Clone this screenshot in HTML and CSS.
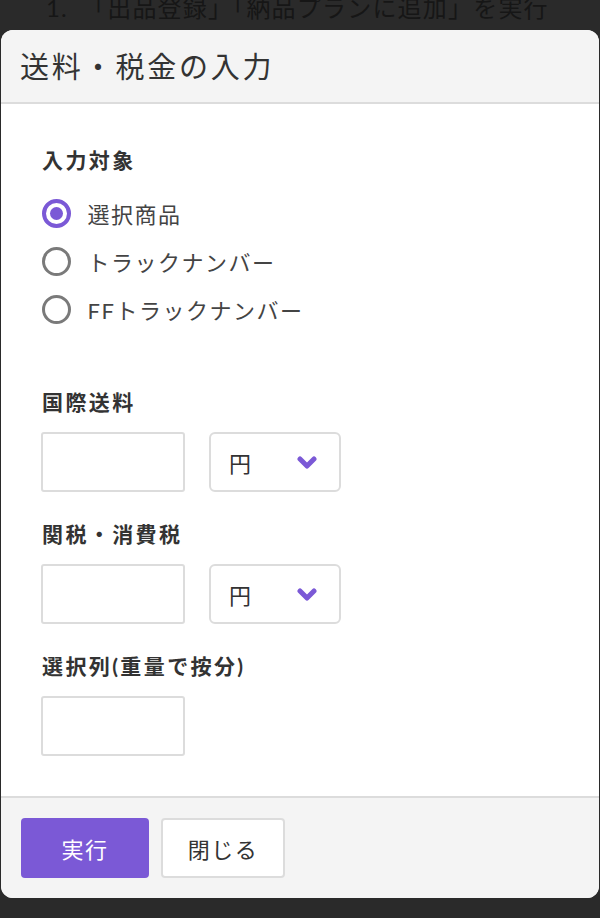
FILE: index.html
```html
<!DOCTYPE html>
<html lang="ja">
<head>
<meta charset="utf-8">
<title>送料・税金の入力</title>
<link rel="stylesheet" href="styles.css">
</head>
<body>
<div class="behind">
  <div class="behind-line"><span class="num">1.</span>「出品登録」「納品プランに追加」を実行</div>
</div>
<div class="modal">
  <div class="modal-header">
    <h2 class="modal-title">送料・税金の入力</h2>
  </div>
  <div class="modal-body">
    <div class="label first">入力対象</div>
    <div class="radios">
      <label class="radio-row"><span class="radio checked"></span><span class="radio-text">選択商品</span></label>
      <label class="radio-row"><span class="radio"></span><span class="radio-text">トラックナンバー</span></label>
      <label class="radio-row"><span class="radio"></span><span class="radio-text">FFトラックナンバー</span></label>
    </div>
    <div class="label section">国際送料</div>
    <div class="field-row">
      <div class="input"></div>
      <div class="select"><span class="select-value">円</span>
        <svg class="chev" width="20" height="14" viewBox="0 0 20 14"><polyline points="3,3 10,10 17,3" fill="none" stroke="#7b59d6" stroke-width="5" stroke-linecap="round" stroke-linejoin="round"/></svg>
      </div>
    </div>
    <div class="label next">関税・消費税</div>
    <div class="field-row">
      <div class="input"></div>
      <div class="select"><span class="select-value">円</span>
        <svg class="chev" width="20" height="14" viewBox="0 0 20 14"><polyline points="3,3 10,10 17,3" fill="none" stroke="#7b59d6" stroke-width="5" stroke-linecap="round" stroke-linejoin="round"/></svg>
      </div>
    </div>
    <div class="label next">選択列(重量で按分)</div>
    <div class="field-row">
      <div class="input"></div>
    </div>
  </div>
  <div class="modal-footer">
    <button class="btn btn-primary">実行</button>
    <button class="btn btn-default">閉じる</button>
  </div>
</div>
</body>
</html>
```

FILE: styles.css
```css
html, body {
  margin: 0;
  padding: 0;
}
body {
  background: #2a2a2a;
  font-family: "Lato", "Noto Sans CJK JP", sans-serif;
  height: 918px;
  overflow: hidden;
}
.behind {
  height: 30px;
  overflow: hidden;
}
.behind-line {
  margin-top: -9px;
  padding-left: 46px;
  font-size: 24px;
  letter-spacing: 1.2px;
  line-height: 34px;
  color: #161616;
  white-space: nowrap;
}
.behind-line .num {
  display: inline-block;
  width: 36px;
}
.modal {
  margin: 0 1px;
  background: #fff;
  border-radius: 12px;
  overflow: hidden;
}
.modal-header {
  height: 72px;
  background: #f4f4f4;
  border-bottom: 2px solid #dcdcdc;
  display: flex;
  align-items: center;
  padding-left: 19px;
}
.modal-title {
  margin: 0;
  font-size: 29px;
  letter-spacing: 2.8px;
  font-weight: 400;
  color: #333;
  line-height: 1;
}
.modal-body {
  padding: 42px 40px 40px 40px;
}
.label {
  font-size: 21px;
  letter-spacing: 2.4px;
  font-weight: 700;
  color: #333;
  line-height: 28px;
  padding-left: 1px;
}
.label.section {
  margin-top: 55px;
}
.label.next {
  margin-top: 28px;
}
.radios {
  margin-top: 15px;
  display: flex;
  flex-direction: column;
}
.radio-row {
  height: 48px;
  display: flex;
  align-items: center;
  gap: 17px;
}
.radio {
  box-sizing: border-box;
  width: 29px;
  height: 29px;
  border-radius: 50%;
  border: 3.5px solid #7a7a7a;
  margin-left: 0.5px;
  position: relative;
  flex: none;
}
.radio.checked {
  border: 4px solid #7b59d6;
}
.radio.checked::after {
  content: "";
  position: absolute;
  left: 50%;
  top: 50%;
  width: 13px;
  height: 13px;
  margin: -6.5px 0 0 -6.5px;
  border-radius: 50%;
  background: #7b59d6;
}
.radio-text {
  font-size: 22px;
  letter-spacing: 1.5px;
  color: #444;
}
.field-row {
  margin-top: 16px;
  display: flex;
  gap: 24px;
}
.input {
  box-sizing: border-box;
  width: 144px;
  height: 60px;
  border: 2px solid #dcdcdc;
  border-radius: 3px;
  background: #fff;
}
.select {
  box-sizing: border-box;
  width: 132px;
  height: 60px;
  border: 2px solid #dcdcdc;
  border-radius: 6px;
  background: #fff;
  display: flex;
  align-items: center;
  justify-content: space-between;
  padding: 0 22px 0 18px;
}
.select-value {
  font-size: 22px;
  color: #333;
}
.chev {
  display: block;
  margin-top: 2px;
}
.modal-footer {
  background: #f4f4f4;
  border-top: 2px solid #dcdcdc;
  padding: 20px;
  display: flex;
  gap: 12px;
}
.btn {
  box-sizing: border-box;
  height: 60px;
  border-radius: 4px;
  font-family: inherit;
  font-size: 22px;
  letter-spacing: 1.5px;
  padding: 0;
  cursor: pointer;
}
.btn-primary {
  width: 128px;
  background: #7b59d6;
  border: none;
  color: #fff;
}
.btn-default {
  width: 124px;
  background: #fff;
  border: 2px solid #dcdcdc;
  color: #333;
}
```
